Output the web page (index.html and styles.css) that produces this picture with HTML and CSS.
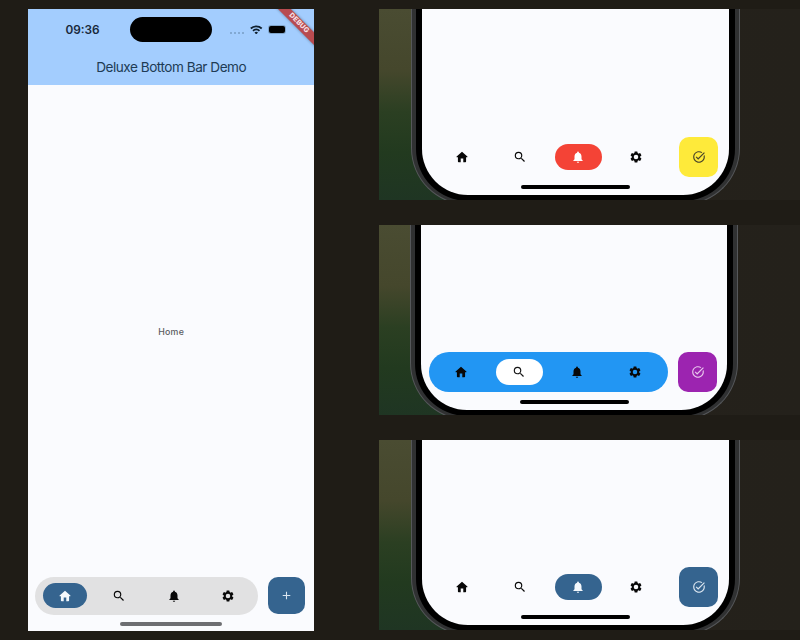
FILE: index.html
```html
<!DOCTYPE html>
<html lang="en">
<head>
<meta charset="utf-8">
<title>Deluxe Bottom Bar Demo</title>
<link rel="stylesheet" href="styles.css">
</head>
<body>
<svg class="sprite" aria-hidden="true">
  <symbol id="home" viewBox="0 0 24 24"><path d="M12 2.8 2.8 11.2c-.5.5-.2 1.3.6 1.3H5v7.2c0 .7.5 1.2 1.2 1.2h3.6v-6.4h4.4v6.4h3.6c.7 0 1.2-.5 1.2-1.2v-7.2h1.6c.8 0 1.1-.8.6-1.3z"/></symbol>
  <symbol id="search" viewBox="0 0 24 24"><path d="M15.5 14h-.79l-.28-.27A6.47 6.47 0 0 0 16 9.5 6.5 6.5 0 1 0 9.5 16c1.61 0 3.09-.59 4.23-1.57l.27.28v.79l5 4.99L20.49 19zm-6 0a4.5 4.5 0 1 1 0-9 4.5 4.5 0 0 1 0 9z"/></symbol>
  <symbol id="bell" viewBox="0 0 24 24"><path d="M12 22c1.1 0 2-.9 2-2h-4c0 1.1.9 2 2 2zm6-6v-5c0-3.07-1.63-5.64-4.5-6.32V4a1.5 1.5 0 0 0-3 0v.68C7.64 5.36 6 7.92 6 11v5l-2 2v1h16v-1z"/></symbol>
  <symbol id="gear" viewBox="0 0 24 24"><path d="M19.14 12.94c.04-.3.06-.61.06-.94 0-.32-.02-.64-.07-.94l2.03-1.58c.18-.14.23-.41.12-.61l-1.92-3.32c-.12-.22-.37-.29-.59-.22l-2.39.96c-.5-.38-1.03-.7-1.62-.94l-.36-2.54a.48.48 0 0 0-.48-.41h-3.84c-.24 0-.43.17-.47.41l-.36 2.54c-.59.24-1.13.57-1.62.94l-2.39-.96c-.22-.08-.47 0-.59.22L2.74 8.87c-.12.21-.08.47.12.61l2.03 1.58c-.05.3-.09.63-.09.94s.02.64.07.94l-2.03 1.58c-.18.14-.23.41-.12.61l1.92 3.32c.12.22.37.29.59.22l2.39-.96c.5.38 1.03.7 1.62.94l.36 2.54c.05.24.24.41.48.41h3.84c.24 0 .44-.17.47-.41l.36-2.54c.59-.24 1.13-.56 1.62-.94l2.39.96c.22.08.47 0 .59-.22l1.92-3.32c.12-.22.07-.47-.12-.61zM12 15.9a3.9 3.9 0 1 1 0-7.8 3.9 3.9 0 0 1 0 7.8z"/></symbol>
  <symbol id="task" viewBox="0 0 24 24"><path d="M22 5.18 10.59 16.6l-4.24-4.24 1.41-1.41 2.83 2.83 10-10zM19.79 10.22c.13.57.21 1.17.21 1.78 0 4.42-3.58 8-8 8s-8-3.58-8-8 3.58-8 8-8c1.58 0 3.04.46 4.28 1.25l1.44-1.44A9.9 9.9 0 0 0 12 2C6.48 2 2 6.48 2 12s4.48 10 10 10 10-4.48 10-10c0-1.19-.22-2.33-.6-3.39z"/></symbol>
  <symbol id="plus" viewBox="0 0 24 24"><path d="M19 13h-6v6h-2v-6H5v-2h6V5h2v6h6z"/></symbol>
</svg>

<main class="stage">
  <section class="app">
    <header class="app-header">
      <div class="status">
        <span class="clock">09:36</span>
        <span class="island"></span>
        <span class="signals">
          <span class="dots"><i></i><i></i><i></i><i></i></span>
          <svg class="wifi" viewBox="0 0 24 18"><g fill="none" stroke="currentColor" stroke-width="3.4"><path d="M1.5 6.6a15 15 0 0 1 21 0"/><path d="M5.8 11a8.9 8.9 0 0 1 12.4 0"/></g><path d="M12 18l-3.4-3.6a5 5 0 0 1 6.8 0z"/></svg>
          <span class="battery"></span>
        </span>
      </div>
      <h1>Deluxe Bottom Bar Demo</h1>
      <span class="debug">DEBUG</span>
    </header>
    <div class="app-body">Home</div>
    <footer class="dock">
      <nav class="bar grey">
        <span class="item"><b class="pill blue"><svg><use href="#home"/></svg></b></span>
        <span class="item"><svg><use href="#search"/></svg></span>
        <span class="item"><svg><use href="#bell"/></svg></span>
        <span class="item"><svg><use href="#gear"/></svg></span>
      </nav>
      <span class="fab blue"><svg><use href="#plus"/></svg></span>
    </footer>
    <div class="handle"></div>
  </section>

  <div class="previews">
    <section class="preview first">
      <div class="device"><div class="bezel"><div class="screen">
        <div class="dock">
          <nav class="bar">
            <span class="item"><svg><use href="#home"/></svg></span>
            <span class="item"><svg><use href="#search"/></svg></span>
            <span class="item"><b class="pill red"><svg><use href="#bell"/></svg></b></span>
            <span class="item"><svg><use href="#gear"/></svg></span>
          </nav>
          <span class="fab yellow"><svg><use href="#task"/></svg></span>
        </div>
        <div class="handle"></div>
      </div></div></div>
    </section>
    <section class="preview second">
      <div class="device"><div class="bezel"><div class="screen">
        <div class="dock">
          <nav class="bar azure">
            <span class="item"><svg><use href="#home"/></svg></span>
            <span class="item"><b class="pill white"><svg><use href="#search"/></svg></b></span>
            <span class="item"><svg><use href="#bell"/></svg></span>
            <span class="item"><svg><use href="#gear"/></svg></span>
          </nav>
          <span class="fab purple"><svg><use href="#task"/></svg></span>
        </div>
        <div class="handle"></div>
      </div></div></div>
    </section>
    <section class="preview third">
      <div class="device"><div class="bezel"><div class="screen">
        <div class="dock">
          <nav class="bar">
            <span class="item"><svg><use href="#home"/></svg></span>
            <span class="item"><svg><use href="#search"/></svg></span>
            <span class="item"><b class="pill blue"><svg><use href="#bell"/></svg></b></span>
            <span class="item"><svg><use href="#gear"/></svg></span>
          </nav>
          <span class="fab blue"><svg><use href="#task"/></svg></span>
        </div>
        <div class="handle"></div>
      </div></div></div>
    </section>
  </div>
</main>
</body>
</html>
```

FILE: styles.css
```css
* { box-sizing: border-box; }

body {
  margin: 0;
  background: #1f1c16;
  font-family: Inter, "Liberation Sans", sans-serif;
}

.sprite { display: none; }

.stage {
  display: flex;
  width: 800px;
  height: 640px;
  padding: 8.5px 0 0 28px;
  overflow: hidden;
}

/* Main app */
.app {
  display: flex;
  flex-direction: column;
  width: 286.4px;
  height: 622px;
  margin-right: 64.6px;
  background: #fafbfe;
}

.app-header {
  position: relative;
  height: 76.5px;
  overflow: hidden;
  background: #a3cdfe;
}

.status {
  display: grid;
  grid-template-columns: 102px 82px 1fr;
  align-items: center;
  height: 42px;
}

.clock {
  padding-left: 37.5px;
  color: #18293c;
  font-size: 11.8px;
  font-weight: 600;
}

.island {
  height: 24.5px;
  border-radius: 13px;
  background: #000;
}

.signals {
  display: flex;
  align-items: center;
  padding-left: 18px;
  color: #10202e;
}

.dots { display: flex; gap: 2px; padding-top: 6px; }
.dots i { width: 2px; height: 2px; border-radius: 1px; background: #779cc5; }
.wifi { width: 12.5px; height: 9.5px; margin-left: 6px; fill: currentColor; }

.battery {
  width: 16px;
  height: 7px;
  margin-left: 6px;
  border-radius: 2px;
  background: #000;
  box-shadow: 0 0 0 1px #80a5cb;
}

h1 {
  margin: 0;
  padding-top: 7.5px;
  color: #203b55;
  font-size: 13.6px;
  font-weight: 400;
  line-height: 18px;
  letter-spacing: -.48px;
  text-align: center;
  white-space: nowrap;
}

.debug {
  position: absolute;
  top: 10px;
  right: -19.5px;
  width: 70px;
  background: #b84b50;
  box-shadow: 0 0 3px #0006;
  color: #f6dfe3;
  font-size: 7px;
  font-weight: 800;
  line-height: 8.5px;
  letter-spacing: .2px;
  text-align: center;
  transform: rotate(45deg);
}

.app-body {
  display: flex;
  flex: 1;
  align-items: center;
  justify-content: center;
  padding-top: 1px;
  color: #5a5c61;
  font-size: 8.8px;
  font-weight: 500;
  letter-spacing: .2px;
}

/* Bottom bar */
.dock { display: flex; align-items: center; }
.bar { display: flex; border-radius: 20px; }
.item { display: flex; flex: 1; align-items: center; justify-content: center; color: #080808; }
.pill { display: flex; align-items: center; justify-content: center; border-radius: 14px; }
.fab { display: flex; align-items: center; justify-content: center; border-radius: 10px; }
.dock svg { width: 14px; height: 14px; fill: currentColor; }
.handle { border-radius: 2px; }

.app .dock { padding-left: 7px; }
.app .bar { width: 223px; height: 37.5px; margin-right: 10px; padding: 0 3px; }
.app .pill { width: 43.5px; height: 25px; }
.app .fab { width: 37px; height: 37px; }
.app .fab svg { width: 13px; height: 13px; }
.app .handle { width: 102px; height: 3.5px; margin: 7.5px 0 5px 92px; background: #6d6e72; }

.grey { background: #e1e1e2; }
.azure { background: #2296f3; }
.blue { background: #35648f; color: #f4f8fc; }
.red { background: #f44336; color: #fff; }
.white { background: #fff; color: #151515; }
.yellow { background: #feea3a; color: #48442a; }
.purple { background: #9c24b0; color: #e8c7ec; }
.fab.blue { color: #dae5ef; }

/* Cropped devices */
.previews { width: 421px; }

.preview {
  width: 421px;
  overflow: hidden;
  background:
    linear-gradient(#4a4c32 0, #45472c 32%, #2b3f22 54%, #223a1f 75%, #1f3523 100%) 0 0 / 80px 100% no-repeat,
    linear-gradient(90deg, #26221b, #24211b);
}

.first { height: 191.5px; margin-bottom: 25px; }
.second { height: 189.5px; margin-bottom: 25.5px; }
.third { height: 190px; }

.device {
  width: 329px;
  height: 194.5px;
  margin-left: 32px;
  padding: 0 4px 2.5px;
  border: solid #55575a;
  border-width: 0 1px 1px;
  border-radius: 0 0 57px 57px;
  background: #303132;
}

.bezel {
  height: 100%;
  padding: 0 6px 6.5px;
  border-radius: 0 0 52px 52px;
  background: #000;
}

.screen {
  display: flex;
  flex-direction: column;
  justify-content: flex-end;
  height: 100%;
  border-radius: 0 0 46px 46px;
  background: #fafbfe;
}

.preview .dock { padding-left: 8px; }
.preview .bar { width: 238.7px; height: 40px; margin-right: 10.5px; padding: 0 3.5px; }
.preview .pill { width: 46.5px; height: 26.5px; }
.preview .fab { width: 39.3px; height: 39.3px; }
.preview .handle { width: 109.5px; height: 4px; margin: 8px 0 5.5px 99px; background: #000; }

.first .device { height: 196px; }
.second .device { width: 328px; margin-left: 31px; }
```
